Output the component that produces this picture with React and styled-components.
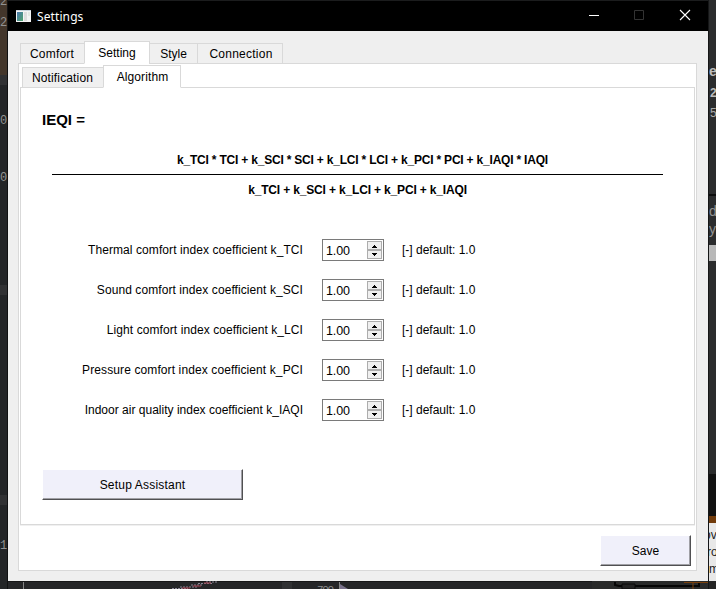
import React from "react";
import styled, { createGlobalStyle } from "styled-components";

const GlobalStyle = createGlobalStyle`
  * { box-sizing: border-box; }
  body { margin: 0; overflow: hidden; background: #242628; }
`;

const Desktop = styled.div`
  width: 716px;
  height: 589px;
  display: grid;
  grid-template: 1px 580px 8px / 8px 700px 8px;
  overflow: hidden;
  background: #1b1c1d;
  font: 12px "Liberation Sans", Arial, sans-serif;
  color: #000;
`;
const LeftStrip = styled.div`
  grid-area: 1 / 1 / 4 / 2;
  position: relative;
  overflow: hidden;
  border-right: 1px solid #101112;
  background: linear-gradient(#43362b 0 75px, #303133 75px 85px, #232527 85px 285px,
    #303133 285px 295px, #232527 295px 495px, #303133 495px 505px, #232527 505px);
`;
const RightStrip = styled.div`
  grid-area: 1 / 3 / 4 / 4;
  position: relative;
  overflow: hidden;
  border-left: 1px solid #151617;
  background: linear-gradient(#2b2c2d 0 194px, #0c0c0c 194px 196px, #2b2c2d 196px 245px,
    #b8b8b8 245px 261px, #2b2c2d 261px 474px, #111 474px 516px, #713b0b 516px 523px,
    #e8e8e8 523px 581px, #242424 581px);
`;
const Bottom = styled.svg`
  grid-area: 3 / 2 / 4 / 3;
  display: block;
  background: #252628;
`;
const Scrap = styled.span`
  position: absolute;
  left: ${(p) => p.$x}px;
  top: ${(p) => p.$y}px;
  line-height: 16px;
  font-family: ${(p) => (p.$mono ? '"Liberation Mono", monospace' : '"Liberation Sans", sans-serif')};
  font-size: ${(p) => p.$size || 12}px;
  font-weight: ${(p) => (p.$bold ? 700 : 400)};
  color: ${(p) => p.$color || "#929292"};
`;
const Window = styled.main`
  grid-area: 2 / 2 / 3 / 3;
  display: flex;
  flex-direction: column;
  background: #efefef;
`;
const TitleBar = styled.header`
  height: 30px;
  display: flex;
  align-items: center;
  padding-left: 8px;
  background: #000;
  color: #fff;
`;
const Title = styled.span`
  flex: 1;
  margin-left: 6px;
  font: 12px "Noto Sans", sans-serif;
  letter-spacing: 0.1px;
`;
const WindowButton = styled.span`
  width: 46px;
  height: 30px;
`;
const Body = styled.div`
  flex: 1;
  padding: 10px 11px 10px 10px;
  display: flex;
  flex-direction: column;
`;
const TabBar = styled.nav`
  height: 23px;
  display: flex;
  align-items: flex-end;
  padding-left: 2px;
  margin-bottom: -1px;
  position: relative;
`;
const Tab = styled.span`
  width: ${(p) => p.$w}px;
  height: ${(p) => (p.$active ? 23 : 21)}px;
  border: 1px solid #d9d9d9;
  border-bottom-color: ${(p) => (p.$active ? "#fff" : "#d9d9d9")};
  background: ${(p) => (p.$active ? "#fff" : "#f0f0f0")};
  margin-left: ${(p) => (p.$first ? 0 : -1)}px;
  padding: 0 ${(p) => p.$pr || 0}px 0 ${(p) => p.$pl || 0}px;
  line-height: ${(p) => (p.$active ? 22 : 20)}px;
  text-align: center;
  letter-spacing: ${(p) => p.$ls || 0}px;
  white-space: nowrap;
`;
const OuterPane = styled.section`
  flex: 1;
  border: 1px solid #d9d9d9;
  background: #fff;
  padding: 1px 1px 0;
  display: flex;
  flex-direction: column;
`;
const InnerPane = styled.section`
  height: 438px;
  border: 1px solid #d9d9d9;
  box-shadow: 0 1px 0 #f0f0f0;
  background: #fff;
  padding: 23px 31px 0 21px;
`;
const Heading = styled.h1`
  margin: 0;
  height: 40px;
  font-size: 15px;
  line-height: 18px;
`;
const Formula = styled.div`
  margin-left: 10px;
  display: flex;
  flex-direction: column;
  align-items: center;
  font-weight: bold;
`;
const FormulaLine = styled.div`
  height: ${(p) => p.$h}px;
  line-height: 18px;
  letter-spacing: ${(p) => p.$ls}px;
  padding-left: ${(p) => p.$pad || 0}px;
`;
const Fraction = styled.div`
  align-self: stretch;
  height: 1px;
  margin-bottom: 6px;
  background: #000;
`;
const Fields = styled.div`
  margin-top: 40px;
  display: grid;
  grid-auto-rows: 22px;
  row-gap: 18px;
`;
const Field = styled.div`
  display: grid;
  grid-template-columns: 261px 62px auto;
  column-gap: 19px;
  line-height: 22px;
`;
const Label = styled.label`
  text-align: right;
  white-space: nowrap;
  letter-spacing: ${(p) => p.$ls}px;
`;
const Spin = styled.div`
  display: flex;
  align-items: center;
  justify-content: space-between;
  border: 1px solid #7a7a7a;
  padding: 0 1px 0 3px;
`;
const Value = styled.span`
  font-size: 12.5px;
  line-height: 22px;
  height: 20px;
  letter-spacing: -0.1px;
`;
const Hint = styled.span`
  margin-left: -1px;
`;
const PushButton = styled.button`
  width: ${(p) => p.$w}px;
  height: ${(p) => p.$h}px;
  margin: ${(p) => p.$m};
  padding: 1px 0 0;
  border: 1px solid #fff;
  border-right-color: #505052;
  border-bottom-color: #505052;
  box-shadow: inset -1px -1px #a0a0a5;
  background: #f0f0fa;
  font: inherit;
  letter-spacing: ${(p) => p.$ls}px;
`;

const rows = [
  ["Thermal comfort index coefficient k_TCI", 0.08],
  ["Sound comfort index coefficient k_SCI", 0.08],
  ["Light comfort index coefficient k_LCI", 0.08],
  ["Pressure comfort index coefficient k_PCI", 0.11],
  ["Indoor air quality index coefficient k_IAQI", 0.01],
];

function Stepper() {
  return (
    <svg width="15" height="18" viewBox="0 0 15 18" shapeRendering="crispEdges">
      <path d="M.5.5h14v8H.5zM.5 9.5h14v8H.5z" fill="#f0f0f0" stroke="#adadad" />
      <path d="M7 4h1v1h1v1h1v1H5V6h1V5h1zM5 12h5v1H9v1H8v1H7v-1H6v-1H5z" fill="#000" />
    </svg>
  );
}

export default function App() {
  return (
    <>
      <GlobalStyle />
      <Desktop>
        <LeftStrip>
          <Scrap $x={0} $y={-6} $mono>2</Scrap>
          <Scrap $x={0} $y={15} $mono>2</Scrap>
          <Scrap $x={0} $y={113} $mono>0</Scrap>
          <Scrap $x={0} $y={170} $mono>0</Scrap>
          <Scrap $x={0} $y={538} $mono>1</Scrap>
        </LeftStrip>
        <Window>
          <TitleBar>
            <svg width="15" height="13" viewBox="0 0 15 13" shapeRendering="crispEdges">
              <defs>
                <linearGradient id="pic" x1="0" y1="0" x2="1" y2="1">
                  <stop offset="0" stopColor="#4a78b0" />
                  <stop offset="1" stopColor="#4fa36a" />
                </linearGradient>
              </defs>
              <path d="M0 0h15v12H0z" fill="#f4f4f4" />
              <path d="M0 0h15v1H0z" fill="#c9d3dc" />
              <path d="M1 2h6v9H1z" fill="url(#pic)" />
              <path d="M8 2h3v9H8z" fill="#dedede" />
              <path d="M12 2h2v4h-2z" fill="#e4e9e4" />
            </svg>
            <Title>Settings</Title>
            <WindowButton>
              <svg width="46" height="30"><path d="M19 14.5h10" stroke="#fff" /></svg>
            </WindowButton>
            <WindowButton>
              <svg width="46" height="30"><path d="M18.5 9.5h9v9h-9z" fill="none" stroke="#333" /></svg>
            </WindowButton>
            <WindowButton>
              <svg width="46" height="30"><path d="M18 9l10 10M28 9L18 19" stroke="#fff" strokeWidth="1.1" /></svg>
            </WindowButton>
          </TitleBar>
          <Body>
            <TabBar>
              <Tab $w={65} $first $ls={0.2} $pr={1}>Comfort</Tab>
              <Tab $w={66} $active>Setting</Tab>
              <Tab $w={49}>Style</Tab>
              <Tab $w={86} $ls={0.25} $pl={2}>Connection</Tab>
            </TabBar>
            <OuterPane>
              <TabBar>
                <Tab $w={82} $first $ls={0.15} $pr={1}>Notification</Tab>
                <Tab $w={78} $active $ls={0.1} $pl={1}>Algorithm</Tab>
              </TabBar>
              <InnerPane>
                <Heading>IEQI =</Heading>
                <Formula>
                  <FormulaLine $h={23} $ls={-0.2} $pad={10}>
                    k_TCI * TCI + k_SCI * SCI + k_LCI * LCI + k_PCI * PCI + k_IAQI * IAQI
                  </FormulaLine>
                  <Fraction />
                  <FormulaLine $h={18} $ls={-0.16}>k_TCI + k_SCI + k_LCI + k_PCI + k_IAQI</FormulaLine>
                </Formula>
                <Fields>
                  {rows.map(([text, ls]) => (
                    <Field key={text}>
                      <Label $ls={ls}>{text}</Label>
                      <Spin><Value>1.00</Value><Stepper /></Spin>
                      <Hint>[-] default: 1.0</Hint>
                    </Field>
                  ))}
                </Fields>
                <PushButton $w={201} $h={31} $m="48px 0 0" $ls={0.2}>Setup Assistant</PushButton>
              </InnerPane>
              <PushButton $w={91} $h={31} $m="10px 4px 0 auto" $ls={0}>Save</PushButton>
            </OuterPane>
          </Body>
        </Window>
        <RightStrip>
          <Scrap $x={0} $y={63} $bold $size={14} $color="#bbb">e</Scrap>
          <Scrap $x={1} $y={85} $bold $color="#bbb">2</Scrap>
          <Scrap $x={1} $y={105} $color="#aaa">5</Scrap>
          <Scrap $x={0} $y={203} $size={14}>d</Scrap>
          <Scrap $x={0} $y={221} $size={14}>y</Scrap>
          <Scrap $x={-5} $y={527} $color="#222">ov</Scrap>
          <Scrap $x={-2} $y={544} $color="#222">ro</Scrap>
          <Scrap $x={0} $y={561} $color="#222">m</Scrap>
        </RightStrip>
        <Bottom width="700" height="8">
          <path d="M0 0h700v1H0z" fill="#171718" />
          <path d="M15.500 1v7M331.500 1v7" stroke="#858585" />
          <path d="M274 1h10v7h-10z" fill="#303133" />
          <path d="M164 7.500h16M172 6h18M183 4h12M190 2.500h15M198 1h12" stroke="#898595" strokeDasharray="2 1" />
          <path d="M174 7h8M185 5h8M196 2h7" stroke="#a63d4c" />
          <path d="M332 3l8 5h-8z" fill="#79718b" />
          <text x="309" y="12" fontFamily="Liberation Mono" fontSize="11" fill="#8d8d8d" textLength="17">700</text>
          <path d="M584 0h116v8H584z" fill="#292a2a" />
          <path d="M607 1v3l4 1h80v-3" fill="none" stroke="#050505" strokeWidth="2" />
          <path d="M614 3h13v5h-13z" fill="#222" stroke="#080808" />
          <path d="M676 1.500h24M685 1v7" stroke="#7b410d" />
        </Bottom>
      </Desktop>
    </>
  );
}
